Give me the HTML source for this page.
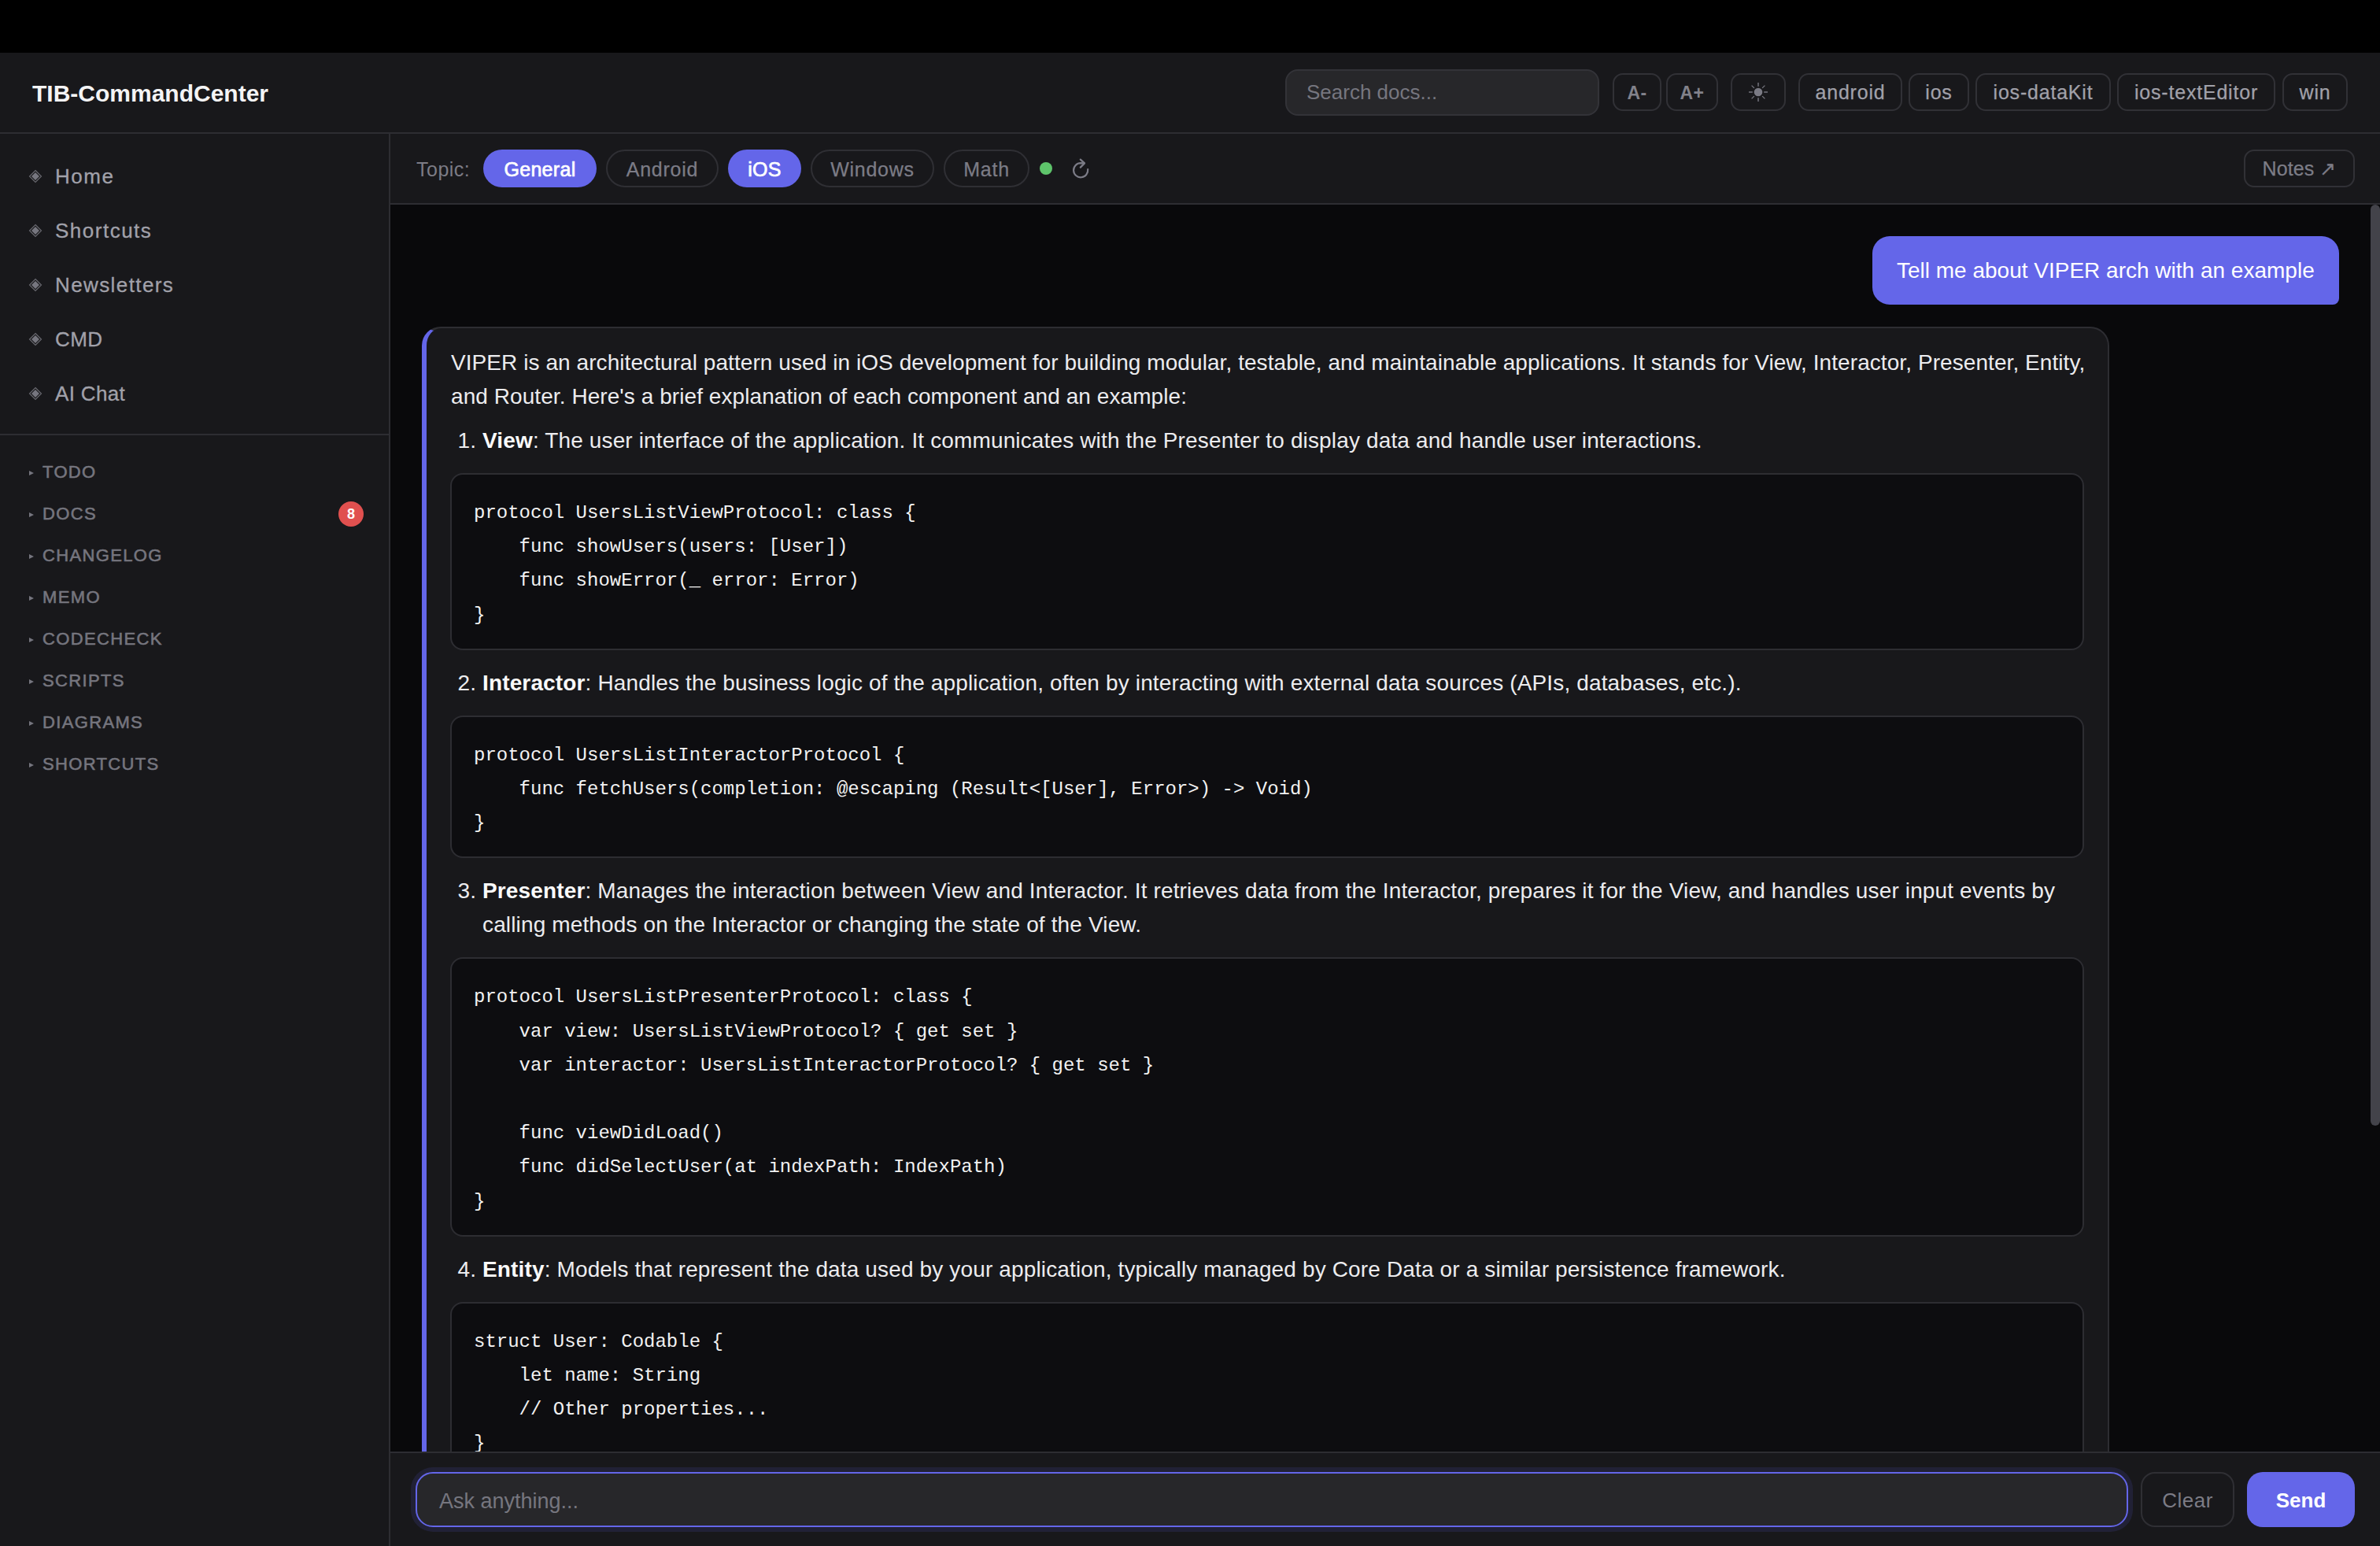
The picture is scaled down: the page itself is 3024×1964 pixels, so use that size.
<!DOCTYPE html>
<html><head><meta charset="utf-8">
<style>
*{box-sizing:border-box;margin:0;padding:0}
@media (max-width:2000px){html{zoom:0.5}}
html,body{width:3024px;height:1964px;overflow:hidden;background:#000;font-family:"Liberation Sans",sans-serif;}
.abs{position:absolute}
#header{position:absolute;left:0;top:67px;width:3024px;height:103px;background:#18181b;border-bottom:2px solid #2d2d32}
#title{position:absolute;left:41px;top:104px;font-size:30px;font-weight:bold;color:#f4f4f5;line-height:30px;white-space:nowrap}
#search{position:absolute;left:1633px;top:88px;width:399px;height:59px;background:#27272a;border:2px solid #333338;border-radius:16px}
#search span{position:absolute;left:25px;top:14px;font-size:26px;line-height:26px;color:#76767f;white-space:nowrap}
.hbtn{position:absolute;top:93px;height:48px;border:2px solid #313136;border-radius:13px;background:#18181b;color:#8a8a94;font-size:25px;line-height:44px;letter-spacing:0.8px;-webkit-text-stroke-width:0.25px;text-align:center;white-space:nowrap}
#sidebar{position:absolute;left:0;top:170px;width:496px;height:1794px;background:#18181b;border-right:2px solid #2d2d32}
.nav{position:absolute;left:70px;font-size:26px;line-height:26px;color:#a1a1aa;white-space:nowrap;letter-spacing:1.3px;-webkit-text-stroke:0.3px #a1a1aa}
.dia{position:absolute;left:36px;width:18px;height:18px}
#divider{position:absolute;left:0;top:551px;width:494px;height:2px;background:#2d2d32}
.sec{position:absolute;left:54px;font-size:22px;line-height:22px;font-weight:normal;-webkit-text-stroke:0.6px #75757e;color:#75757e;letter-spacing:1.35px;white-space:nowrap}
.tri{position:absolute;left:37px;width:0;height:0;border-left:6px solid #75757e;border-top:3.5px solid transparent;border-bottom:3.5px solid transparent}
#badge{position:absolute;left:430px;top:637px;width:32px;height:32px;border-radius:16px;background:#e0504f;color:#fff;font-size:18px;font-weight:bold;text-align:center;line-height:32px}
#topic{position:absolute;left:496px;top:170px;width:2528px;height:90px;background:#18181b;border-bottom:2px solid #2d2d32}
.pill{position:absolute;top:190px;height:48px;border-radius:24px;font-size:25px;line-height:46px;letter-spacing:0.9px;text-align:center;white-space:nowrap}
.pill.on{background:#6466e9;color:#fff;font-weight:normal;-webkit-text-stroke:0.7px #fff;line-height:50px;letter-spacing:0.3px}
.pill.off{border:2px solid #2f2f34;color:#7c7c86;letter-spacing:0.75px;-webkit-text-stroke:0.25px #7c7c86}
#chat{position:absolute;left:496px;top:260px;width:2528px;height:1584px;background:#09090b;overflow:hidden}
#thumb{position:absolute;left:3012px;top:260px;width:12px;height:1170px;background:#43434a;border-radius:6px}
#ubub{position:absolute;left:2379px;top:300px;width:593px;height:87px;background:#6466e9;border-radius:22px 22px 8px 22px;color:#fff;font-size:28px;line-height:28px;white-space:nowrap}
#ubub span{position:absolute;left:31px;top:30px}
#amsg{position:absolute;left:40px;top:155px;width:2144px;background:#18181b;border:2px solid #2d2d32;border-left:6px solid #6466e9;border-radius:24px;padding:22px 30px 30px 30px;color:#ececef;font-size:28px;line-height:43px;letter-spacing:0.1px}
#amsg p{white-space:nowrap;padding-left:1px;letter-spacing:0.07px}
#amsg ol{padding-left:41px;margin-top:13px}
#amsg li{white-space:nowrap;letter-spacing:0.14px}
#amsg b{font-weight:bold;color:#fafafa}
pre{font-family:"Liberation Mono",monospace;font-size:24px;line-height:43.2px;background:#0d0d10;border:2px solid #2d2d32;border-radius:16px;padding:27px 28px 21px 28px;margin:20px 0 20px -41px;letter-spacing:0;color:#f2f2f2;white-space:pre}
#inbar{position:absolute;left:496px;top:1844px;width:2528px;height:120px;background:#18181b;border-top:2px solid #2d2d32}
#input{position:absolute;left:528px;top:1870px;width:2176px;height:70px;background:#27272a;border:2px solid #6466e9;border-radius:22px;box-shadow:0 0 0 6px rgba(99,102,241,0.13)}
#input span{position:absolute;left:28px;top:22px;font-size:27px;line-height:27px;color:#76767f;white-space:nowrap}
#clear{position:absolute;left:2720px;top:1870px;width:119px;height:70px;border:2px solid #2f2f34;border-radius:18px;color:#7c7c86;font-size:26px;line-height:69px;letter-spacing:0.5px;text-align:center}
#send{position:absolute;left:2855px;top:1870px;width:137px;height:70px;background:#6466e9;border-radius:20px;color:#fff;font-weight:bold;font-size:26px;line-height:73px;text-align:center}
</style></head>
<body>
<div id="header"></div>
<div id="title">TIB-CommandCenter</div>
<div id="search"><span>Search docs...</span></div>
<div class="hbtn" style="left:2049px;width:62px;font-size:23px;font-weight:bold;letter-spacing:0.4px;-webkit-text-stroke-width:0;line-height:47px;color:#82828b">A-</div>
<div class="hbtn" style="left:2117px;width:66px;font-size:23px;font-weight:bold;letter-spacing:0.4px;-webkit-text-stroke-width:0;line-height:47px;color:#82828b">A+</div>
<div class="hbtn" style="left:2199px;width:70px">
<svg width="36" height="36" viewBox="-18 -18 36 36" style="position:absolute;left:15px;top:4px" stroke="#7a7a84" stroke-width="1.4" stroke-linecap="butt">
<circle r="5.3" fill="#7a7a84" stroke="none"/>
<line x1="0" y1="-7.3" x2="0" y2="-12"/><line x1="0" y1="7.3" x2="0" y2="12"/>
<line x1="-7.2" y1="0" x2="-12" y2="0"/><line x1="7.2" y1="0" x2="12" y2="0"/>
<g stroke-width="1.2"><line x1="5.1" y1="-5.1" x2="8.4" y2="-8.4"/><line x1="-5.1" y1="-5.1" x2="-8.4" y2="-8.4"/>
<line x1="5.1" y1="5.1" x2="8.4" y2="8.4"/><line x1="-5.1" y1="5.1" x2="-8.4" y2="8.4"/></g>
</svg></div>
<div class="hbtn" style="left:2285px;width:132px;color:#a1a1aa">android</div>
<div class="hbtn" style="left:2425px;width:77px;color:#a1a1aa">ios</div>
<div class="hbtn" style="left:2510px;width:172px;color:#a1a1aa">ios-dataKit</div>
<div class="hbtn" style="left:2690px;width:201px;color:#a1a1aa">ios-textEditor</div>
<div class="hbtn" style="left:2900px;width:83px;color:#a1a1aa">win</div>

<div id="sidebar"></div>
<svg class="dia" style="top:215px;left:35.8px" viewBox="0 0 18 18"><path d="M9 1.5L16.5 9L9 16.5L1.5 9Z" fill="none" stroke="#68686f" stroke-width="1.15"/><path d="M9 4L14 9L9 14L4 9Z" fill="#76767f"/></svg>
<div class="nav" style="top:211px;letter-spacing:1.5px">Home</div>
<svg class="dia" style="top:284px;left:35.8px" viewBox="0 0 18 18"><path d="M9 1.5L16.5 9L9 16.5L1.5 9Z" fill="none" stroke="#68686f" stroke-width="1.15"/><path d="M9 4L14 9L9 14L4 9Z" fill="#76767f"/></svg>
<div class="nav" style="top:280px;letter-spacing:1.5px">Shortcuts</div>
<svg class="dia" style="top:353px;left:35.8px" viewBox="0 0 18 18"><path d="M9 1.5L16.5 9L9 16.5L1.5 9Z" fill="none" stroke="#68686f" stroke-width="1.15"/><path d="M9 4L14 9L9 14L4 9Z" fill="#76767f"/></svg>
<div class="nav" style="top:349px;letter-spacing:1.4px">Newsletters</div>
<svg class="dia" style="top:422px;left:35.8px" viewBox="0 0 18 18"><path d="M9 1.5L16.5 9L9 16.5L1.5 9Z" fill="none" stroke="#68686f" stroke-width="1.15"/><path d="M9 4L14 9L9 14L4 9Z" fill="#76767f"/></svg>
<div class="nav" style="top:418px;letter-spacing:0.4px">CMD</div>
<svg class="dia" style="top:491px;left:35.8px" viewBox="0 0 18 18"><path d="M9 1.5L16.5 9L9 16.5L1.5 9Z" fill="none" stroke="#68686f" stroke-width="1.15"/><path d="M9 4L14 9L9 14L4 9Z" fill="#76767f"/></svg>
<div class="nav" style="top:487px;letter-spacing:0.35px">AI Chat</div>
<div id="divider"></div>
<div class="tri" style="top:598px"></div><div class="sec" style="top:589px">TODO</div>
<div class="tri" style="top:651px"></div><div class="sec" style="top:642px">DOCS</div>
<div id="badge">8</div>
<div class="tri" style="top:704px"></div><div class="sec" style="top:695px">CHANGELOG</div>
<div class="tri" style="top:757px"></div><div class="sec" style="top:748px">MEMO</div>
<div class="tri" style="top:810px"></div><div class="sec" style="top:801px">CODECHECK</div>
<div class="tri" style="top:863px"></div><div class="sec" style="top:854px">SCRIPTS</div>
<div class="tri" style="top:916px"></div><div class="sec" style="top:907px">DIAGRAMS</div>
<div class="tri" style="top:969px"></div><div class="sec" style="top:960px">SHORTCUTS</div>

<div id="topic"></div>
<div class="abs" style="left:529px;top:193px;font-size:25px;line-height:44px;letter-spacing:0.5px;color:#7c7c86">Topic:</div>
<div class="pill on" style="left:614px;width:144px">General</div>
<div class="pill off" style="left:770px;width:143px">Android</div>
<div class="pill on" style="left:925px;width:93px">iOS</div>
<div class="pill off" style="left:1030px;width:157px">Windows</div>
<div class="pill off" style="left:1199px;width:109px">Math</div>
<div class="abs" style="left:1321px;top:206px;width:16px;height:16px;border-radius:8px;background:#5ec46b"></div>
<svg class="abs" style="left:1360px;top:200px" width="28" height="30" viewBox="0 0 28 30" fill="none" stroke="#7c7c87" stroke-width="2.2" stroke-linecap="round" stroke-linejoin="round">
<path d="M22.2 15.15A9.1 9.1 0 1 1 13.15 7.1L17.6 7.3"/><path d="M12.8 2.6L18 7.4L12.8 12.6"/></svg>
<div class="hbtn" style="left:2851px;top:190px;width:141px;height:48px;line-height:44px;color:#7c7c86;font-size:25px;letter-spacing:0.1px">Notes &#8599;</div>

<div id="chat">
<div id="amsg">
<p>VIPER is an architectural pattern used in iOS development for building modular, testable, and maintainable applications. It stands for View, Interactor, Presenter, Entity,<br>and Router. Here's a brief explanation of each component and an example:</p>
<ol>
<li><b>View</b>: The user interface of the application. It communicates with the Presenter to display data and handle user interactions.
<pre>protocol UsersListViewProtocol: class {
    func showUsers(users: [User])
    func showError(_ error: Error)
}</pre></li>
<li><b>Interactor</b>: Handles the business logic of the application, often by interacting with external data sources (APIs, databases, etc.).
<pre>protocol UsersListInteractorProtocol {
    func fetchUsers(completion: @escaping (Result&lt;[User], Error&gt;) -&gt; Void)
}</pre></li>
<li><b>Presenter</b>: Manages the interaction between View and Interactor. It retrieves data from the Interactor, prepares it for the View, and handles user input events by<br>calling methods on the Interactor or changing the state of the View.
<pre>protocol UsersListPresenterProtocol: class {
    var view: UsersListViewProtocol? { get set }
    var interactor: UsersListInteractorProtocol? { get set }

    func viewDidLoad()
    func didSelectUser(at indexPath: IndexPath)
}</pre></li>
<li><b>Entity</b>: Models that represent the data used by your application, typically managed by Core Data or a similar persistence framework.
<pre>struct User: Codable {
    let name: String
    // Other properties...
}
</pre></li>
</ol>
</div>
</div>
<div id="thumb"></div>
<div id="ubub"><span>Tell me about VIPER arch with an example</span></div>

<div id="inbar"></div>
<div id="input"><span>Ask anything...</span></div>
<div id="clear">Clear</div>
<div id="send">Send</div>
</body></html>
